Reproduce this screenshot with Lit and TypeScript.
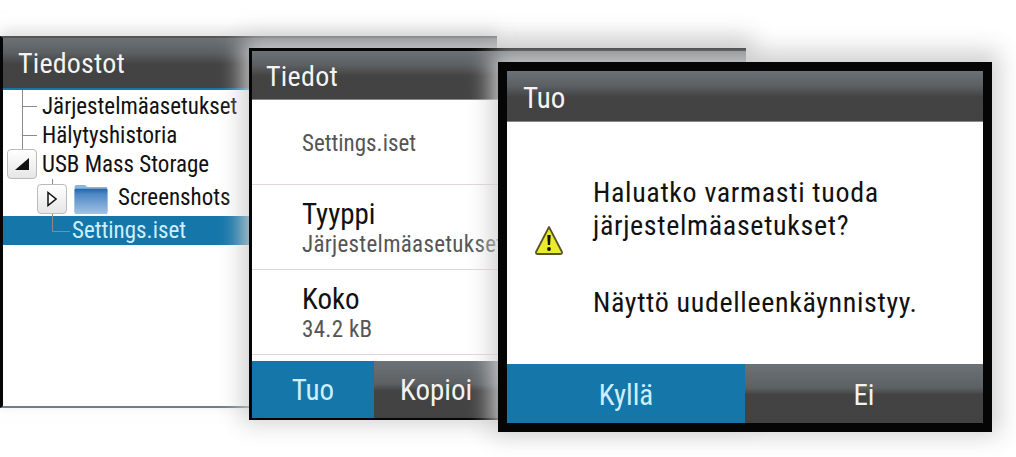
import { LitElement, html, css, svg } from "lit";
import { customElement } from "lit/decorators.js";

const warn = svg`<svg class="warn" viewBox="0 0 30 32" width="30" height="32">
<defs><filter id="b"><feGaussianBlur stdDeviation="0.4"/></filter></defs>
<path d="M15 2 L28 27 Q28.500 29 26 29 L4 29 Q1.500 29 2 27 Z" fill="#eceb2a" stroke="#55552a" stroke-width="1.800" stroke-linejoin="round" filter="url(#b)"/>
<path d="M13.300 10 h3.400 l-.6 10 h-2.200 Z" fill="#111"/><circle cx="15" cy="24" r="1.900" fill="#111"/></svg>`;

const folder = svg`<svg viewBox="0 0 36 31" width="36" height="30">
<defs><linearGradient id="f" x1="0" y1="0" x2="0" y2="1"><stop offset="0" stop-color="#1f66ad"/><stop offset=".22" stop-color="#4f88c4"/><stop offset="1" stop-color="#a3c3e6"/></linearGradient></defs>
<path d="M1 3 Q1 1 3 1 H12 L14 3 H34 Q35 3 35 5 V29 Q35 31 33 31 H3 Q1 31 1 29 Z" fill="#8db4dc"/>
<rect x="1" y="5" width="34" height="26" rx="1.500" fill="url(#f)"/></svg>`;

@customElement("app-root")
export class AppRoot extends LitElement {
  static styles = css`
    :host { display: block; position: relative; width: 1016px; height: 457px; background: #fff; overflow: hidden;
      font-family: Roboto, "Open Sans", sans-serif; font-stretch: condensed; color: #111; }
    .win { position: absolute; display: flex; flex-direction: column; background: #fff; border-style: solid; border-color: #050505; box-sizing: border-box; box-shadow: 0 -4px 22px 7px rgba(205,205,205,.95); }
    .w1 { left: 0; top: 36px; width: 497px; height: 372px; border-width: 2px 0 2px 3px; border-bottom-color: #6d7f8f; border-top-color: #555; box-shadow: 0 -5px 14px rgba(190,190,190,.55); }
    .w2 { left: 249px; top: 48px; width: 497px; height: 372px; border-width: 3px 0 2px 3px; }
    .w3 { left: 498px; top: 62px; width: 494px; height: 370px; border-width: 9px; }
    .head { flex: none; display: flex; align-items: center; box-sizing: border-box; color: #f4f4f4; background: linear-gradient(#6b7277 0, #5b5f62 30%, #434343 52%, #424242 100%); }
    .w1 .head { height: 52px; padding: 0 0 0 15px; font-size: 28px; letter-spacing: .2px; border-bottom: 2px solid #1476a9; }
    .w2 .head { height: 49px; padding: 2px 0 0 14px; font-size: 28px; letter-spacing: .3px; border-bottom: 1px solid #888; }
    .w3 .head { height: 51px; padding: 3px 0 0 16px; font-size: 29px; border-bottom: 1px solid #888; }
    .tree { position: relative; display: flex; flex-direction: column; padding-top: 2px; font-size: 23px; }
    .row { display: flex; align-items: center; height: 29px; line-height: 29px; padding-left: 39px; white-space: nowrap; }
    .row.sub { height: 37px; padding-left: 115px; }
    .row.sel { background: #1476a9; color: #cfeefb; padding-left: 69px; height: 29px; }
    .line { position: absolute; background: #8a8a8a; width: 1px; height: 1px; }
    .l1 { left: 19px; top: 0; height: 59px; }
    .l2 { left: 19px; top: 16px; width: 15px; }
    .l3 { left: 19px; top: 45px; width: 15px; }
    .l4 { left: 49px; top: 89px; height: 52px; }
    .l5 { left: 49px; top: 141px; width: 18px; }
    .exp { position: absolute; box-sizing: border-box; width: 30px; height: 30px; border: 1px solid #bbb; border-radius: 4px; background: linear-gradient(#fff, #e6e6e6); display: flex; align-items: center; justify-content: center; }
    .e1 { left: 4px; top: 59px; }
    .e2 { left: 34px; top: 94px; }
    .folder { position: absolute; left: 70px; top: 94px; display: flex; }
    .info { flex: 1; display: flex; flex-direction: column; min-height: 0; }
    .item { flex: none; height: 85px; box-sizing: border-box; border-bottom: 1px solid #e3d6d8; padding-left: 50px; display: flex; flex-direction: column; justify-content: center; white-space: nowrap; overflow: hidden; }
    .i1 { font-size: 23px; padding-top: 3px; color: #555; }
    .i2, .i3 { padding-top: 5px; }
    .big { font-size: 29px; line-height: 30px; color: #111; }
    .small { font-size: 23px; line-height: 31px; letter-spacing: .3px; color: #555; }
    .foot { flex: none; display: flex; font-size: 29px; }
    .w2 .foot { height: 57px; }
    .w3 .foot { height: 59px; }
    .btn { display: flex; align-items: center; justify-content: center; color: #f2f2f2; background: linear-gradient(#6b7277 0, #5d6164 40%, #434343 52%, #424242 100%); }
    .btn.on { background: #1476a9; color: #cfeefb; }
    .w2 .btn.on { width: 122px; }
    .w2 .btn:not(.on) { flex: 1; justify-content: flex-start; padding-left: 26px; }
    .w3 .btn { flex: 1; padding-top: 2px; }
    .body { flex: 1; position: relative; display: flex; flex-direction: column; padding: 54px 0 0 86px; font-size: 28px; letter-spacing: .65px; line-height: 33px; }
    .gap { height: 44px; }
    .warn { position: absolute; left: 27px; top: 103px; }
  `;
  render() {
    return html`
      <div class="win w1">
        <div class="head">Tiedostot</div>
        <div class="tree">
          <div class="line l1"></div><div class="line l2"></div><div class="line l3"></div>
          <div class="row">Järjestelmäasetukset</div>
          <div class="row">Hälytyshistoria</div>
          <div class="row">USB Mass Storage</div>
          <div class="row sub">Screenshots</div>
          <div class="row sel">Settings.iset</div>
          <div class="line l4"></div><div class="line l5"></div>
          <div class="exp e1"><svg width="16" height="14" viewBox="0 0 16 14"><path d="M1 13 L15 1 V13 Z" fill="#111"/></svg></div>
          <div class="exp e2"><svg width="10" height="16" viewBox="0 0 10 16"><path d="M1 1.500 L9 8 L1 14.500 Z" fill="#fff" stroke="#111" stroke-width="1.500"/></svg></div>
          <div class="folder">${folder}</div>
        </div>
      </div>
      <div class="win w2">
        <div class="head">Tiedot</div>
        <div class="info">
          <div class="item i1">Settings.iset</div>
          <div class="item i2"><span class="big">Tyyppi</span><span class="small">Järjestelmäasetukset</span></div>
          <div class="item i3"><span class="big">Koko</span><span class="small">34.2 kB</span></div>
        </div>
        <div class="foot"><div class="btn on">Tuo</div><div class="btn">Kopioi</div></div>
      </div>
      <div class="win w3">
        <div class="head">Tuo</div>
        <div class="body">
          ${warn}
          <div>Haluatko varmasti tuoda</div>
          <div>järjestelmäasetukset?</div>
          <div class="gap"></div>
          <div>Näyttö uudelleenkäynnistyy.</div>
        </div>
        <div class="foot"><div class="btn on">Kyllä</div><div class="btn">Ei</div></div>
      </div>`;
  }
}
